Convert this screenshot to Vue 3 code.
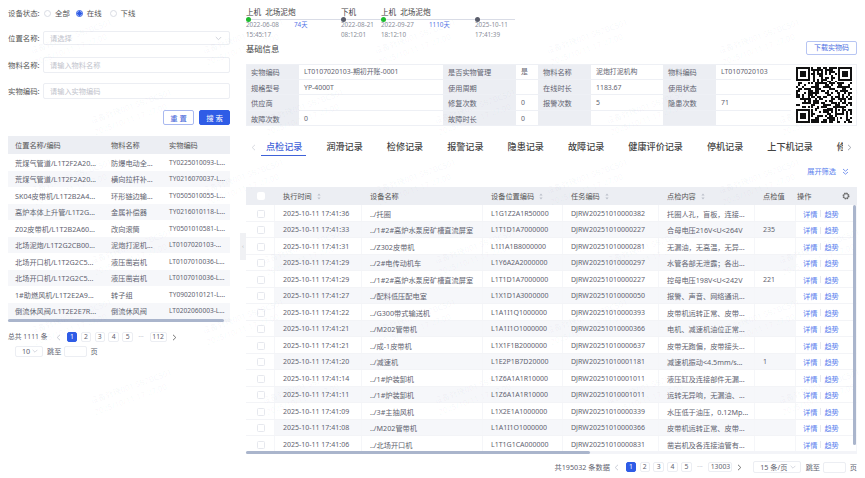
<script setup>
const leftRows = [
  ['荒煤气管道/L1T2F2A20...', '防爆电动全...', 'TY0225010093-L...'],
  ['荒煤气管道/L1T2F2A20...', '横向拉杆补...', 'TY0216070037-L...'],
  ['SK04皮带机/L1T2B2A4...', '环形链边输...', 'TY0505010055-L...'],
  ['高炉本体上升管/L1T2G...', '金属补偿器', 'TY0216010118-L...'],
  ['Z02皮带机/L1T2B2A60...', '改向滚筒', 'TY0501010581-L...'],
  ['北场泥炮/L1T2G2CB00...', '泥炮打泥机...', 'LT0107020103-...'],
  ['北场开口机/L1T2G2C5...', '液压凿岩机', 'LT0107010036-L...'],
  ['北场开口机/L1T2G2C5...', '液压凿岩机', 'LT0107010036-L...'],
  ['1#助燃风机/L1T2E2A9...', '转子组', 'TY0902010121-L...'],
  ['倒流休风阀/L1T2E2E7R...', '倒流休风阀', 'LT0202060003-L...']
]
const rows = [
  ['2025-10-11 17:41:36', '../托圈', 'L1G1Z2A1R50000', 'DJRW20251010000382', '托圈人孔，盲板，连接...', ''],
  ['2025-10-11 17:41:33', '../1#2#高炉水泵房矿槽直流屏室', 'L1T1D1A7000000', 'DJRW20251010000227', '合母电压216V<U<264V', '235'],
  ['2025-10-11 17:41:31', '../Z302皮带机', 'L1I1A1B8000000', 'DJRW20251010000281', '无漏油，无高温，无异...', ''],
  ['2025-10-11 17:41:29', '../2#电传动机车', 'L1Y6A2A2000000', 'DJRW20251010000297', '水管各部无泄露；各出...', ''],
  ['2025-10-11 17:41:29', '../1#2#高炉水泵房矿槽直流屏室', 'L1T1D1A7000000', 'DJRW20251010000227', '控母电压198V<U<242V', '221'],
  ['2025-10-11 17:41:27', '../配料低压配电室', 'L1X1D1A3000000', 'DJRW20251010000050', '报警、声音、网络通讯...', ''],
  ['2025-10-11 17:41:22', '../G300带式输送机', 'L1A1I1Q1000000', 'DJRW20251010000393', '皮带机运转正常、皮带...', ''],
  ['2025-10-11 17:41:21', '../M202管带机', 'L1A1I1O1000000', 'DJRW20251010000366', '电机、减速机油位正常...', ''],
  ['2025-10-11 17:41:21', '../成-1皮带机', 'L1X1F1B2000000', 'DJRW20251010000637', '皮带无跑偏，皮带接头...', ''],
  ['2025-10-11 17:41:20', '../减速机', 'L1E2P1B7D20000', 'DJRW20251010001181', '减速机振动<4.5mm/s...', '1'],
  ['2025-10-11 17:41:14', '../1#炉装卸机', 'L1Z6A1A1R10000', 'DJRW20251010001011', '液压缸及连接部件无漏...', ''],
  ['2025-10-11 17:41:11', '../1#炉装卸机', 'L1Z6A1A1R10000', 'DJRW20251010001011', '运转无异响，无漏油、...', ''],
  ['2025-10-11 17:41:09', '../3#主抽风机', 'L1X2E1A1000000', 'DJRW20251010000339', '水压低于油压，0.12Mp...', ''],
  ['2025-10-11 17:41:08', '../M202管带机', 'L1A1I1O1000000', 'DJRW20251010000366', '皮带机运转正常、皮带...', ''],
  ['2025-10-11 17:41:06', '../北场开口机', 'L1T1G1CA000000', 'DJRW20251010000831', '凿岩机及各连接油管有...', '']
]
const tabs = ['点检记录', '润滑记录', '检修记录', '报警记录', '隐患记录', '故障记录', '健康评价记录', '停机记录', '上下机记录', '修复记录']
const timeline = [
  { w: 95, state: '上机', place: '北场泥炮', date: '2022-06-08', time: '15:45:17', dur: '74天', on: true },
  { w: 40, state: '下机', place: '', date: '2022-08-21', time: '08:12:01', dur: '', on: false },
  { w: 94, state: '上机', place: '北场泥炮', date: '2022-09-27', time: '18:12:10', dur: '1110天', on: true },
  { w: 40, state: '', place: '', date: '2025-10-11', time: '17:41:39', dur: '', on: false }
]
const info = [
  ['实物编码', 'LT0107020103-期初开账-0001', '是否实物管理', '是', '物料名称', '泥炮打泥机构', '物料编码', 'LT0107020103'],
  ['规格型号', 'YP-4000T', '使用周期', '', '在线时长', '1183.67', '使用状态', ''],
  ['供应商', '', '修复次数', '0', '报警次数', '5', '隐患次数', '71'],
  ['故障次数', '0', '故障时长', '0', '', '', '', '']
]

function buildQr() {
  const n = 29
  const cells = []
  let s = 20251011
  for (let y = 0; y < n; y++) {
    cells.push([])
    for (let x = 0; x < n; x++) {
      s = (s * 1103515245 + 12345) & 0x7fffffff
      cells[y].push((s >> 16) & 1)
    }
  }
  const finder = (ox, oy) => {
    for (let y = -1; y <= 7; y++) {
      for (let x = -1; x <= 7; x++) {
        const cx = ox + x
        const cy = oy + y
        if (cx < 0 || cy < 0 || cx >= n || cy >= n) continue
        const ring = x >= 0 && x <= 6 && y >= 0 && y <= 6 && (x === 0 || x === 6 || y === 0 || y === 6)
        const core = x >= 2 && x <= 4 && y >= 2 && y <= 4
        cells[cy][cx] = ring || core ? 1 : 0
      }
    }
  }
  finder(0, 0)
  finder(22, 0)
  finder(0, 22)
  for (let y = 20; y <= 24; y++) {
    for (let x = 20; x <= 24; x++) {
      const edge = x === 20 || x === 24 || y === 20 || y === 24
      cells[y][x] = edge || (x === 22 && y === 22) ? 1 : 0
    }
  }
  let d = ''
  cells.forEach((row, y) => row.forEach((v, x) => {
    if (v) d += `M${x} ${y}h1v1h-1z`
  }))
  return d
}
const qrPath = buildQr()

const marks = []
for (let r = 0; r < 6; r++) {
  for (let c = 0; c < 5; c++) {
    marks.push({
      left: c * 172 + 30 + (r % 2) * 60 + 'px',
      top: r * 70 + 30 + 'px'
    })
  }
}
</script>

<template>
  <div class="page">
    <aside class="side">
      <div class="form-row status-row">
        <span class="f-label">设备状态:</span>
        <label class="radio"><i class="dot"></i>全部</label>
        <label class="radio"><i class="dot checked"></i>在线</label>
        <label class="radio"><i class="dot"></i>下线</label>
      </div>
      <div class="form-row select-row">
        <span class="f-label">位置名称:</span>
        <div class="field">
          <span class="ph">请选择</span>
          <svg class="chev" width="7" height="5" viewBox="0 0 7 5"><path d="M.8 1l2.7 2.7L6.2 1" fill="none" stroke="#c4c8d2" stroke-width=".8" /></svg>
        </div>
      </div>
      <div class="form-row input-row first-input">
        <span class="f-label">物料名称:</span>
        <div class="field"><span class="ph">请输入物料名称</span></div>
      </div>
      <div class="form-row input-row second-input">
        <span class="f-label">实物编码:</span>
        <div class="field"><span class="ph">请输入实物编码</span></div>
      </div>
      <div class="actions">
        <button class="btn ghost">重 置</button>
        <button class="btn primary">搜 索</button>
      </div>

      <div class="l-table">
        <div class="l-row l-head">
          <span>位置名称/编码</span><span>物料名称</span><span>实物编码</span>
        </div>
        <div v-for="(r, i) in leftRows" :key="i" class="l-row l-item" :class="{ zebra: i % 2 === 1 }">
          <span>{{ r[0] }}</span><span>{{ r[1] }}</span><span class="latin">{{ r[2] }}</span>
        </div>
        <div class="l-scroll"><div class="l-thumb"></div></div>
      </div>

      <div class="l-pager">
        <span class="total">总共 1111 条</span>
        <svg class="arrow prev" width="5" height="7" viewBox="0 0 5 7"><path d="M4 .8L1.2 3.5 4 6.2" fill="none" stroke="#c4c8d2" stroke-width=".9" /></svg>
        <span class="pg on">1</span><span class="pg">2</span><span class="pg">3</span><span class="pg">4</span><span class="pg">5</span>
        <span class="more">•••</span>
        <span class="pg wide">112</span>
        <svg class="arrow next" width="5" height="7" viewBox="0 0 5 7"><path d="M1 .8l2.8 2.7L1 6.2" fill="none" stroke="#666" stroke-width=".9" /></svg>
      </div>
      <div class="l-pager2">
        <div class="mini-select">10
          <svg width="6" height="4" viewBox="0 0 6 4"><path d="M.6.8L3 3.2 5.4.8" fill="none" stroke="#c4c8d2" stroke-width=".7" /></svg>
        </div>
        <span>跳至</span>
        <div class="jump"></div>
        <span>页</span>
      </div>
    </aside>

    <main class="main">
      <div class="handle">‹</div>

      <div class="timeline">
        <div v-for="(t, i) in timeline" :key="i" class="seg" :style="{ width: t.w + 'px' }">
          <div class="seg-label"><span>{{ t.state }}</span><span>{{ t.place }}</span></div>
          <div class="seg-track"><i class="tl-dot" :class="{ on: t.on }"></i></div>
          <div class="seg-date"><span class="seg-d">{{ t.date }}</span><span class="seg-dur">{{ t.dur }}</span></div>
          <div class="seg-time">{{ t.time }}</div>
        </div>
      </div>

      <div class="info-head">
        <span class="info-title">基础信息</span>
        <button class="dl">下载实物码</button>
      </div>

      <div class="info">
        <template v-for="(row, i) in info" :key="i">
          <template v-for="(c, j) in row" :key="j">
            <div :class="j % 2 === 0 ? 'i-label' : 'i-val'">{{ c }}</div>
          </template>
          <div v-if="i === 0" class="qr">
            <svg width="56" height="56" viewBox="0 0 29 29" shape-rendering="crispEdges"><path :d="qrPath" fill="#111" /></svg>
          </div>
        </template>
      </div>

      <div class="tabs">
        <svg class="tab-arrow" width="5" height="7" viewBox="0 0 5 7"><path d="M4 .8L1.2 3.5 4 6.2" fill="none" stroke="#d2d5dd" stroke-width=".9" /></svg>
        <div class="tab-track">
          <span v-for="(t, i) in tabs" :key="t" class="tab" :class="{ active: i === 0 }">{{ t }}</span>
        </div>
        <svg class="tab-arrow" width="5" height="7" viewBox="0 0 5 7"><path d="M1 .8l2.8 2.7L1 6.2" fill="none" stroke="#9a9ea8" stroke-width=".9" /></svg>
      </div>

      <div class="filter-row">
        <span>展开筛选</span>
        <svg width="7" height="7" viewBox="0 0 7 7"><path d="M1 1l2.5 2.2L6 1M1 4l2.5 2.2L6 4" fill="none" stroke="#5b7fee" stroke-width=".8" /></svg>
      </div>

      <div class="r-table">
        <div class="r-row r-head">
          <div class="cell c-check"><i class="box head-box"></i></div>
          <div class="cell">执行时间<svg class="sort" width="4" height="7" viewBox="0 0 4 7"><path d="M2 .5L3.6 2.6H.4zM2 6.5L.4 4.4h3.2z" fill="#bcc0ca" /></svg></div>
          <div class="cell">设备名称</div>
          <div class="cell">设备位置编码<svg class="sort" width="4" height="7" viewBox="0 0 4 7"><path d="M2 .5L3.6 2.6H.4zM2 6.5L.4 4.4h3.2z" fill="#bcc0ca" /></svg></div>
          <div class="cell">任务编码<svg class="sort" width="4" height="7" viewBox="0 0 4 7"><path d="M2 .5L3.6 2.6H.4zM2 6.5L.4 4.4h3.2z" fill="#bcc0ca" /></svg></div>
          <div class="cell">点检内容<svg class="sort" width="4" height="7" viewBox="0 0 4 7"><path d="M2 .5L3.6 2.6H.4zM2 6.5L.4 4.4h3.2z" fill="#bcc0ca" /></svg></div>
          <div class="cell">点检值</div>
          <div class="cell c-op-head">
            <span>操作</span>
            <svg width="8" height="8" viewBox="0 0 8 8"><circle cx="4" cy="4" r="2.7" fill="none" stroke="#666" stroke-width="1.6" stroke-dasharray="1.3 .82" /><circle cx="4" cy="4" r="2.4" fill="none" stroke="#666" stroke-width=".7" /></svg>
          </div>
        </div>
        <div class="r-body">
          <div v-for="(r, i) in rows" :key="i" class="r-row r-item" :class="{ zebra: i % 2 === 1 }">
            <div class="cell c-check fixed"><i class="box"></i></div>
            <div class="cell latin">{{ r[0] }}</div>
            <div class="cell">{{ r[1] }}</div>
            <div class="cell latin">{{ r[2] }}</div>
            <div class="cell latin">{{ r[3] }}</div>
            <div class="cell">{{ r[4] }}</div>
            <div class="cell latin">{{ r[5] }}</div>
            <div class="cell c-op fixed"><a>详情</a><i class="sep"></i><a>趋势</a></div>
          </div>
          <div class="v-scroll"></div>
        </div>
        <div class="h-scroll"><div class="h-thumb"></div></div>
      </div>

      <div class="r-pager">
        <span class="r-total">共195032 条数据</span>
        <svg class="r-prev" width="5" height="7" viewBox="0 0 5 7"><path d="M4 .8L1.2 3.5 4 6.2" fill="none" stroke="#c4c8d2" stroke-width=".9" /></svg>
        <span class="pg on">1</span><span class="pg">2</span><span class="pg">3</span><span class="pg">4</span><span class="pg">5</span>
        <span class="more">•••</span>
        <span class="pg wider">13003</span>
        <svg class="r-next" width="5" height="7" viewBox="0 0 5 7"><path d="M1 .8l2.8 2.7L1 6.2" fill="none" stroke="#666" stroke-width=".9" /></svg>
        <div class="size-select">15 条/页
          <svg width="6" height="4" viewBox="0 0 6 4"><path d="M.6.8L3 3.2 5.4.8" fill="none" stroke="#c4c8d2" stroke-width=".7" /></svg>
        </div>
        <span>跳至</span>
        <div class="jump"></div>
        <span>页</span>
      </div>
    </main>

    <div class="marks" aria-hidden="true">
      <div v-for="(m, i) in marks" :key="i" class="mark" :style="{ left: m.left, top: m.top }">设备管理001 SB2BC501<br />2025/10/11 17:27:00</div>
    </div>
  </div>
</template>

<style scoped>
.page {
  position: relative;
  display: flex;
  width: 865px;
  height: 478px;
  overflow: hidden;
  background: #fff;
  color: #5f6370;
  font-family: "Noto Sans", "Noto Sans CJK SC", sans-serif;
  font-size: 7.2px;
  line-height: 10px;
}
.side {
  width: 240px;
  flex: none;
  box-sizing: border-box;
  padding: 7px 10px 0 8px;
}
.form-row {
  display: flex;
  align-items: center;
}
.f-label {
  width: 35px;
  flex: none;
  font-size: 7.4px;
  color: #555;
}
.status-row { height: 12px; color: #555; }
.radio {
  display: flex;
  align-items: center;
  gap: 4px;
  margin-right: 8px;
  font-size: 7.4px;
}
.radio:first-of-type { margin-left: 1px; margin-right: 6px; }
.dot {
  width: 7px;
  height: 7px;
  box-sizing: border-box;
  border: 1px solid #d9dce4;
  border-radius: 50%;
}
.dot.checked {
  border-color: #2f5ce6;
  background: radial-gradient(circle, #2f5ce6 0 2px, #fff 2.4px);
}
.select-row { margin-top: 12px; height: 14px; }
.first-input { margin-top: 12px; height: 16px; }
.second-input { margin-top: 10px; height: 16px; }
.field {
  flex: 1;
  height: 100%;
  display: flex;
  align-items: center;
  justify-content: space-between;
  box-sizing: border-box;
  padding: 0 7px 0 6px;
  border: 1px solid #eceef3;
  border-radius: 2px;
}
.ph { color: #bfc3cc; font-size: 7.2px; }
.actions {
  display: flex;
  justify-content: flex-end;
  gap: 5px;
  margin-top: 11px;
}
.btn {
  width: 31px;
  height: 15px;
  padding: 0;
  border-radius: 2px;
  font: inherit;
  font-size: 7.4px;
}
.ghost { border: 1px solid #a9b9f0; background: #fff; color: #3f62d8; }
.primary { border: 1px solid #2f5ce6; background: #2f5ce6; color: #fff; }
.l-table { margin-top: 11px; }
.l-row {
  display: grid;
  grid-template-columns: 96px 58px 1fr;
  height: 16.5px;
  box-sizing: border-box;
  align-items: center;
  padding-left: 7px;
  white-space: nowrap;
  overflow: hidden;
}
.l-item { padding-top: 1px; }
.l-row.zebra { background: #f6f7fa; }
.l-row .latin { font-size: 6.6px; }
.l-head { height: 18px; background: #eceef3; color: #555; }
.l-scroll { height: 3px; background: #f3f4f8; }
.l-thumb { width: 216px; height: 100%; border-radius: 2px; background: #aab5cc; }
.l-pager {
  display: flex;
  align-items: center;
  gap: 3.4px;
  height: 12px;
  margin-top: 9px;
}
.total { width: 42px; flex: none; font-size: 6.8px; white-space: nowrap; }
.prev { margin-right: 2px; margin-left: 3px; }
.pg {
  width: 10.5px;
  height: 10px;
  flex: none;
  box-sizing: border-box;
  border: 1px solid #eceef3;
  border-radius: 2px;
  text-align: center;
  font-size: 6.8px;
  line-height: 8px;
}
.pg.on { border-color: #2f5ce6; background: #2f5ce6; color: #fff; }
.pg.wide { width: 17px; }
.pg.wider { width: 24px; }
.more { width: 10px; flex: none; text-align: center; color: #c4c8d2; font-size: 4px; letter-spacing: .3px; }
.next { margin-left: 2px; }
.l-pager2 {
  display: flex;
  align-items: center;
  height: 12px;
  margin: 2px 0 0 7px;
  gap: 3px;
}
.mini-select {
  display: flex;
  align-items: center;
  justify-content: space-between;
  box-sizing: border-box;
  width: 28px;
  height: 11px;
  margin-right: 1px;
  padding: 0 4px 0 6px;
  border: 1px solid #eceef3;
  border-radius: 2px;
}
.jump {
  width: 23px;
  height: 11px;
  box-sizing: border-box;
  border: 1px solid #eceef3;
  border-radius: 2px;
}
.main {
  position: relative;
  flex: 1;
  min-width: 0;
  box-sizing: border-box;
  padding: 7px 8px 0 6px;
}
.handle {
  position: absolute;
  left: 0;
  top: 233px;
  width: 6px;
  height: 27px;
  background: #f0f1f4;
  color: #b5b9c2;
  font-size: 6px;
  line-height: 27px;
  text-align: center;
}
.timeline { display: flex; height: 34px; }
.seg { flex: none; }
.seg-label {
  display: flex;
  gap: 4px;
  height: 10px;
  color: #444;
  font-size: 7.6px;
  white-space: nowrap;
}
.seg-track {
  position: relative;
  height: 3px;
}
.seg-track::before {
  content: "";
  position: absolute;
  left: 0;
  right: 0;
  top: 1.5px;
  height: 1.5px;
  background: #d9dce6;
}
.tl-dot {
  position: absolute;
  left: 0;
  top: -.5px;
  width: 5px;
  height: 5px;
  border-radius: 50%;
  background: #5a5d6b;
}
.tl-dot.on { background: #1dbb2d; }
.seg-date {
  display: flex;
  height: 10px;
  font-size: 6.3px;
  color: #8a8e99;
  white-space: nowrap;
}
.seg-d { width: 48px; flex: none; }
.seg-dur { color: #5474e6; }
.seg-time { height: 10px; font-size: 6.3px; color: #8a8e99; }
.info-head {
  display: flex;
  align-items: center;
  justify-content: space-between;
  height: 14px;
}
.info-title { padding-top: 1px; font-size: 8.3px; color: #444; }
.dl {
  width: 51px;
  height: 14px;
  padding: 0;
  border: 1px solid #b7c5f3;
  border-radius: 2px;
  background: #fff;
  color: #4d70e2;
  font: inherit;
  font-size: 7px;
}
.info {
  display: grid;
  grid-template-columns: 53px 144px 73px 22px 53px 72px 53px 75px 66px;
  grid-auto-rows: 15.5px;
  margin-top: 9px;
  outline: 1px solid #eef0f5;
  outline-offset: -1px;
}
.i-label, .i-val {
  display: flex;
  align-items: center;
  padding-left: 5px;
  padding-top: 1px;
  box-sizing: border-box;
  box-shadow: inset 0 -1px 0 #eef0f5;
  white-space: nowrap;
  overflow: hidden;
}
.i-label { background: #eceef3; font-size: 7.2px; }
.i-val { font-size: 6.9px; }
.qr {
  grid-column: 9;
  grid-row: 1 / span 4;
  display: flex;
  align-items: center;
  justify-content: center;
}
.tabs {
  display: flex;
  align-items: center;
  height: 18px;
  margin-top: 12px;
}
.tab-arrow { flex: none; margin: 0 4px 0 5px; }
.tab-arrow:last-child { margin: 0 5.5px 0 3.5px; }
.tab-track {
  display: flex;
  gap: 24px;
  flex: 1;
  min-width: 0;
  height: 100%;
  padding-left: 6px;
  overflow: hidden;
}
.tab {
  position: relative;
  flex: none;
  color: #444;
  font-size: 9.1px;
  font-weight: 500;
  line-height: 18px;
}
.tab.active { color: #3f62d8; }
.tab.active::after {
  content: "";
  position: absolute;
  left: -5px;
  right: -4px;
  bottom: 0;
  height: 1px;
  background: #3f62d8;
}
.filter-row {
  display: flex;
  align-items: center;
  justify-content: flex-end;
  gap: 6px;
  height: 14px;
  margin-top: 8px;
  padding-right: 8px;
  color: #5b7fee;
  font-size: 7.2px;
}
.r-table { position: relative; margin-top: 9px; }
.r-row {
  display: grid;
  grid-template-columns: 29px 87px 121px 80px 96px 96px 41px 61px;
  height: 16.5px;
  white-space: nowrap;
}
.r-item .cell {
  box-sizing: border-box;
  padding-top: 1px;
  box-shadow: inset 0 -1px 0 #f3f4f7, inset -1px 0 0 #f5f6f9;
}
.cell {
  display: flex;
  align-items: center;
  gap: 5px;
  padding-left: 8px;
  overflow: hidden;
}
.cell.latin { font-size: 7px; }
.r-row.zebra { background: #f6f7fa; }
.fixed { background: #fff; }
.r-head { height: 18px; background: #eceef3; color: #555; }
.c-check { justify-content: center; padding-left: 0; }
.box {
  width: 8px;
  height: 8px;
  box-sizing: border-box;
  border: 1px solid #e6e8ee;
  border-radius: 1.5px;
  background: #fff;
}
.head-box { border-color: #fff; }
.c-op-head { justify-content: space-between; padding: 0 7px 0 1px; }
.c-op { gap: 3px; padding-left: 7px; color: #5b7fee; }
.sep { width: 1px; height: 7px; background: #e6e8ee; }
.r-body { position: relative; height: 246px; overflow: hidden; }
.v-scroll {
  position: absolute;
  right: 1px;
  top: 0;
  width: 3px;
  height: 240px;
  border-radius: 2px;
  background: #aab5cc;
}
.h-scroll { height: 3px; background: #f3f4f8; }
.h-thumb { width: 344px; height: 100%; border-radius: 2px; background: #aab5cc; }
.r-pager {
  display: flex;
  align-items: center;
  justify-content: flex-end;
  gap: 3.4px;
  height: 12px;
  margin-top: 7px;
}
.r-total { margin-right: 1px; }
.r-prev { margin-right: 3px; }
.r-next { margin: 0 8px 0 1px; }
.size-select {
  display: flex;
  align-items: center;
  justify-content: space-between;
  box-sizing: border-box;
  width: 48px;
  height: 12px;
  margin-right: 1px;
  padding: 0 4px 0 6px;
  border: 1px solid #eceef3;
  border-radius: 2px;
}
.marks {
  position: absolute;
  inset: 0;
  pointer-events: none;
}
.mark {
  position: absolute;
  transform: rotate(-20deg);
  color: rgba(90, 100, 130, 0.05);
  font-size: 8px;
  line-height: 12px;
  white-space: nowrap;
}
</style>
